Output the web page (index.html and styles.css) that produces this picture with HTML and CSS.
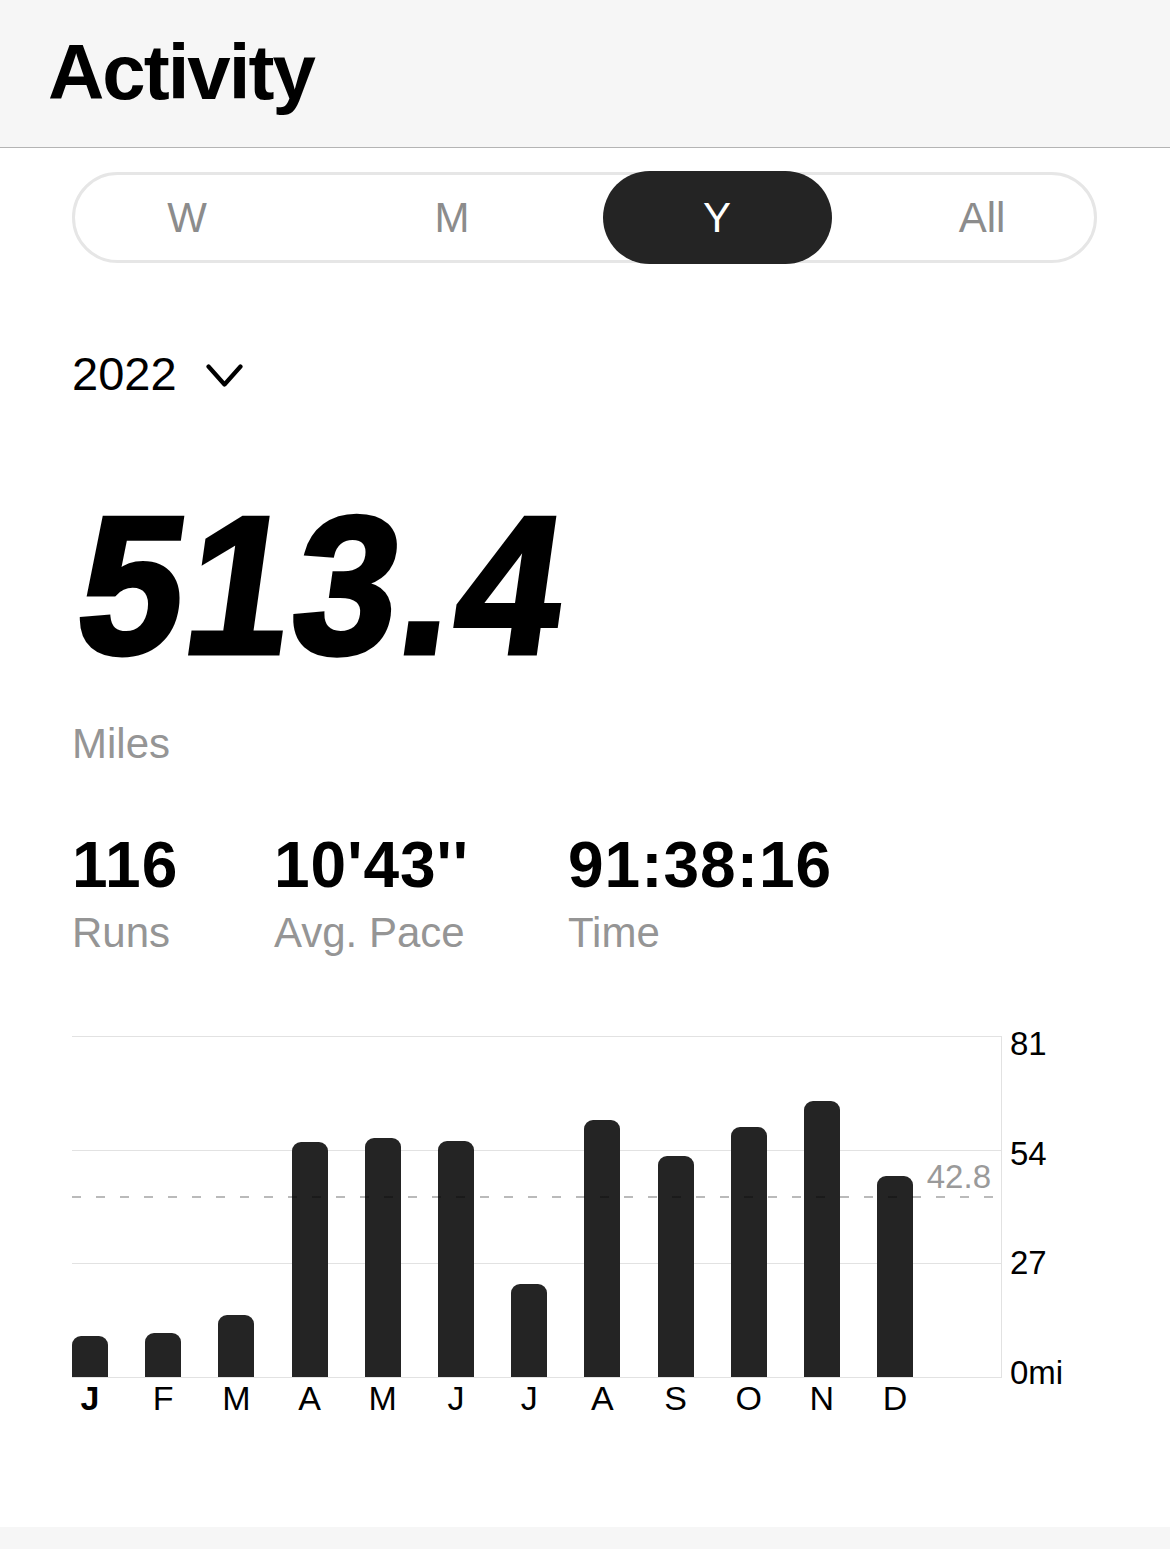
FILE: index.html
```html
<!DOCTYPE html>
<html lang="en">
<head>
<meta charset="utf-8">
<title>Activity</title>
<link rel="stylesheet" href="styles.css">
</head>
<body>
<div class="page">
  <header class="topbar">
    <h1 class="title">Activity</h1>
  </header>

  <main class="content">
    <div class="segmented">
      <div class="seg">W</div>
      <div class="seg">M</div>
      <div class="seg seg-active">Y</div>
      <div class="seg">All</div>
    </div>

    <div class="year">
      <span class="year-text">2022</span>
      <svg class="chevron" width="37" height="24" viewBox="0 0 37 24" aria-hidden="true">
        <path d="M2.5 2.5 L18.5 20.5 L34.5 2.5" fill="none" stroke="#000" stroke-width="4.2" stroke-linecap="round" stroke-linejoin="round"/>
      </svg>
    </div>

    <div class="total-wrap">
      <div class="total">513.4</div>
    </div>
    <div class="total-label">Miles</div>

    <div class="stats">
      <div class="stat">
        <div class="stat-value">116</div>
        <div class="stat-label">Runs</div>
      </div>
      <div class="stat">
        <div class="stat-value">10'43''</div>
        <div class="stat-label">Avg. Pace</div>
      </div>
      <div class="stat">
        <div class="stat-value">91:38:16</div>
        <div class="stat-label">Time</div>
      </div>
    </div>

    <div class="chart">
      <div class="chart-main">
        <div class="plot">
          <div class="gridlines">
            <div class="gridrow"></div>
            <div class="gridrow"></div>
            <div class="gridrow gridrow-last"></div>
          </div>
          <div class="bars">
            <div class="bar" style="height:41px"></div>
            <div class="bar" style="height:44px"></div>
            <div class="bar" style="height:62px"></div>
            <div class="bar" style="height:235px"></div>
            <div class="bar" style="height:239px"></div>
            <div class="bar" style="height:236px"></div>
            <div class="bar" style="height:93px"></div>
            <div class="bar" style="height:257px"></div>
            <div class="bar" style="height:221px"></div>
            <div class="bar" style="height:250px"></div>
            <div class="bar" style="height:276px"></div>
            <div class="bar" style="height:201px"></div>
          </div>
          <div class="avg-line"></div>
          <div class="avg-label">42.8</div>
        </div>
        <div class="months">
          <span class="month month-current">J</span>
          <span class="month">F</span>
          <span class="month">M</span>
          <span class="month">A</span>
          <span class="month">M</span>
          <span class="month">J</span>
          <span class="month">J</span>
          <span class="month">A</span>
          <span class="month">S</span>
          <span class="month">O</span>
          <span class="month">N</span>
          <span class="month">D</span>
        </div>
      </div>
      <div class="axis">
        <span class="tick">81</span>
        <span class="tick">54</span>
        <span class="tick">27</span>
        <span class="tick">0mi</span>
      </div>
    </div>
  </main>

  <footer class="tabbar"></footer>
</div>
</body>
</html>
```

FILE: styles.css
```css
* {
  box-sizing: border-box;
}

html, body {
  margin: 0;
  padding: 0;
  background: #ffffff;
}

body {
  font-family: "Liberation Sans", Arial, Helvetica, sans-serif;
  color: #000;
}

.page {
  width: 1170px;
  min-height: 1549px;
  display: flex;
  flex-direction: column;
}

/* Header */
.topbar {
  height: 148px;
  background: #f6f6f6;
  border-bottom: 1px solid #b4b4b4;
  padding: 33px 48px 0;
}

.title {
  margin: 0;
  font-size: 78px;
  line-height: 78px;
  font-weight: 700;
  letter-spacing: -2px;
}

/* Content */
.content {
  padding: 0 73px 0 72px;
  flex: 1;
}

.segmented {
  margin-top: 24px;
  height: 91px;
  border: 3px solid #e6e6e6;
  border-radius: 46px;
  display: grid;
  grid-template-columns: repeat(4, 229px);
  column-gap: 36px;
  justify-content: center;
}

.seg {
  margin: -4px 0;
  display: flex;
  align-items: center;
  justify-content: center;
  font-size: 42px;
  color: #8c8c8c;
  border-radius: 47px;
}

.seg-active {
  background: #242424;
  color: #ffffff;
}

.year {
  margin-top: 88px;
  display: flex;
  align-items: center;
  gap: 29px;
  height: 46px;
}

.year-text {
  font-size: 47px;
  line-height: 46px;
}

.chevron {
  display: block;
  margin-top: 4px;
}

.total-wrap {
  margin-top: 89px;
  height: 200px;
}

.total {
  display: inline-block;
  margin-left: -5px;
  font-size: 196px;
  line-height: 200px;
  font-weight: 700;
  letter-spacing: 4px;
  -webkit-text-stroke: 5px #000;
  transform-origin: left bottom;
  transform: skewX(-8deg) scaleX(0.95);
}

.total-label {
  margin-top: 37px;
  font-size: 42px;
  line-height: 42px;
  color: #959595;
}

.stats {
  margin-top: 68px;
  display: grid;
  grid-template-columns: 202px 294px auto;
}

.stat-value {
  font-size: 64px;
  line-height: 64px;
  font-weight: 700;
  letter-spacing: 1px;
}

.stat-label {
  margin-top: 15px;
  font-size: 42px;
  line-height: 42px;
  color: #959595;
}

/* Chart */
.chart {
  margin-top: 82px;
  display: flex;
}

.chart-main {
  width: 930px;
}

.plot {
  position: relative;
  height: 342px;
  display: grid;
  border-right: 1px solid #e2e2e2;
}

.gridlines,
.bars {
  grid-area: 1 / 1;
}

.gridlines {
  display: flex;
  flex-direction: column;
}

.gridrow {
  flex: 1;
  border-top: 1px solid #e2e2e2;
}

.gridrow-last {
  border-bottom: 1px solid #e2e2e2;
}

.bars {
  display: grid;
  grid-template-columns: repeat(12, 36px);
  column-gap: 37.2px;
  align-items: end;
  padding-bottom: 1px;
}

.bar {
  background: #242424;
  border-radius: 9px 9px 0 0;
}

.avg-line {
  position: absolute;
  left: 0;
  right: 6px;
  top: 160px;
  height: 2px;
  background: repeating-linear-gradient(90deg, rgba(0, 0, 0, 0.27) 0 9px, transparent 9px 24px);
}

.avg-label {
  position: absolute;
  right: 10px;
  top: 124px;
  font-size: 33px;
  line-height: 33px;
  color: #9a9a9a;
}

.months {
  margin-top: 3px;
  display: grid;
  grid-template-columns: repeat(12, 36px);
  column-gap: 37.2px;
}

.month {
  display: flex;
  justify-content: center;
  font-size: 34px;
  line-height: 34px;
  white-space: nowrap;
}

.month-current {
  font-weight: 700;
}

.axis {
  margin-left: 8px;
  margin-top: -9px;
  height: 362px;
  display: flex;
  flex-direction: column;
  justify-content: space-between;
}

.tick {
  font-size: 33px;
  line-height: 33px;
}

/* Bottom bar */
.tabbar {
  height: 22px;
  background: #f6f6f6;
}
```
